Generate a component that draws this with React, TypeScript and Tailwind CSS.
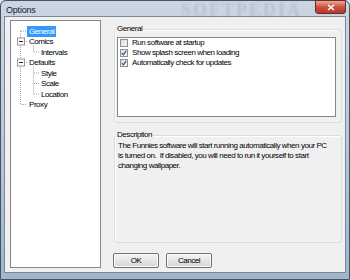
import React from 'react';

// Options dialog, Windows 7 Aero look, scaled down
const TREE = [
  { label: 'General', level: 0, selected: true },
  { label: 'Comics', level: 0 },
  { label: 'Intervals', level: 1 },
  { label: 'Defaults', level: 0 },
  { label: 'Style', level: 1 },
  { label: 'Scale', level: 1 },
  { label: 'Location', level: 1 },
  { label: 'Proxy', level: 0 },
];

const OPTIONS = [
  { label: 'Run software at startup', checked: false },
  { label: 'Show splash screen when loading', checked: true },
  { label: 'Automatically check for updates', checked: true },
];

function TreeLines() {
  const c = (i: number) => 10 + i * 10.5;
  const line = { stroke: '#a3a3a3', strokeWidth: 1, strokeDasharray: '1 1' };
  const box = (i: number) => (
    <g key={`b${i}`}>
      <rect x={6.5} y={c(i) - 3.5} width={7} height={7} fill="#fff" stroke="#979797" />
      <line x1={8} x2={12} y1={c(i)} y2={c(i)} stroke="#222" />
    </g>
  );
  return (
    <svg className="absolute inset-0 pointer-events-none" width="89" height="246">
      <line x1={9.5} x2={9.5} y1={c(0)} y2={c(7)} {...line} />
      <line x1={10} x2={16} y1={c(0)} y2={c(0)} {...line} />
      <line x1={10} x2={16} y1={c(7)} y2={c(7)} {...line} />
      <line x1={13} x2={16} y1={c(1)} y2={c(1)} {...line} />
      <line x1={13} x2={16} y1={c(3)} y2={c(3)} {...line} />
      <line x1={22.5} x2={22.5} y1={c(1) + 4} y2={c(2)} {...line} />
      <line x1={23} x2={28} y1={c(2)} y2={c(2)} {...line} />
      <line x1={22.5} x2={22.5} y1={c(3) + 4} y2={c(6)} {...line} />
      <line x1={23} x2={28} y1={c(4)} y2={c(4)} {...line} />
      <line x1={23} x2={28} y1={c(5)} y2={c(5)} {...line} />
      <line x1={23} x2={28} y1={c(6)} y2={c(6)} {...line} />
      {box(1)}
      {box(3)}
    </svg>
  );
}

function CheckBox({ checked }: { checked: boolean }) {
  return (
    <div className="w-[8px] h-[8px] border border-[#8e8f8f] bg-gradient-to-br from-[#dcdcdc] to-[#f6f6f6] flex items-center justify-center shrink-0">
      {checked && (
        <svg width="6" height="6" viewBox="0 0 6 6">
          <path d="M0.8 3.2 L2.4 4.8 L5.2 0.9" fill="none" stroke="#3a4f86" strokeWidth="1.2" />
        </svg>
      )}
    </div>
  );
}

function Button({ children }: { children: React.ReactNode }) {
  return (
    <button className="w-[46px] h-[15px] rounded-[2px] border border-[#707070] bg-gradient-to-b from-[#f3f3f3] via-[#e6e6e6] to-[#d3d3d3] text-[8px] leading-none text-black flex items-center justify-center shadow-[inset_0_0_0_1px_#fbfbfb]">
      {children}
    </button>
  );
}

export default function App() {
  return (
    <div className="w-[350px] h-[280px] overflow-hidden bg-[#d9dfe6] font-['Liberation_Sans',Arial,sans-serif] tracking-[-0.45px] text-black">
      <div className="relative w-[350px] h-[280px] flex flex-col rounded-t-[6px] border border-[#46525e] bg-gradient-to-b from-[#cad6e3] via-[#b9c8d8] to-[#9fb6cc] px-[3px] pb-[6px]">
        {/* title bar */}
        <div className="h-[16px] flex items-start justify-between">
          <span className="pl-[2px] pt-[4px] text-[9px] leading-[10px] text-[#1a1a1a] tracking-[-0.2px]">Options</span>
          <div className="w-[31px] h-[14px] -mt-px rounded-b-[3px] border border-[#6b2a24] bg-gradient-to-b from-[#e9a99a] via-[#c9503f] to-[#b8392c] flex items-center justify-center">
            <svg width="8" height="7" viewBox="0 0 8 7">
              <path d="M1 1 L7 6 M7 1 L1 6" stroke="#fff" strokeWidth="1.6" />
            </svg>
          </div>
        </div>
        <span className="absolute left-[180px] top-[-4px] text-[18px] font-bold tracking-[2px] text-[#4d5966] opacity-15 blur-[1px] font-['Liberation_Serif',serif] pointer-events-none">SOFTPEDIA</span>

        {/* client area */}
        <div className="flex-1 flex border border-[#7a8898] bg-[#f0f0f0] pt-[3px] pb-[4px] pl-[5px] pr-[3px]">
          {/* tree */}
          <div className="relative w-[91px] border border-[#828790] bg-white pt-[5px]">
            <TreeLines />
            {TREE.map((t) => (
              <div key={t.label} className={`relative h-[10.5px] flex items-center ${t.level === 0 ? 'pl-[16px]' : 'pl-[28px]'}`}>
                <span
                  className={`text-[8px] leading-[9px] px-[1px] border border-transparent ${t.selected ? 'bg-[#3399ff] text-white border-dotted border-[#6d5338]' : ''}`}
                >
                  {t.label}
                </span>
              </div>
            ))}
          </div>

          {/* right side */}
          <div className="flex-1 flex flex-col ml-[13px] pt-[4px]">
            <fieldset className="h-[99px] border border-[#d5dfe5] rounded-[3px] pl-[1px] pr-[5px] pb-[5px] shadow-[inset_1px_1px_0_#fff]">
              <legend className="px-[1px] text-[8px] leading-[10px]">General</legend>
              <div className="mt-[3px] ml-[1px] h-[80px] border border-[#828790] bg-white pl-[2px]">
                {OPTIONS.map((o) => (
                  <div key={o.label} className="h-[10px] flex items-center gap-[4px]">
                    <CheckBox checked={o.checked} />
                    <span className="text-[8px] leading-[10px]">{o.label}</span>
                  </div>
                ))}
              </div>
            </fieldset>

            <fieldset className="mt-[7px] h-[113px] border border-[#d5dfe5] rounded-[3px] pl-[1px] pr-[5px] shadow-[inset_1px_1px_0_#fff]">
              <legend className="px-[1px] text-[8px] leading-[10px]">Description</legend>
              <p className="pl-[2px] pt-[1px] text-[8px] leading-[10px] whitespace-pre">
                {'The Funnies software will start running automatically when your PC\nis turned on.  If disabled, you will need to run it yourself to start\nchanging wallpaper.'}
              </p>
            </fieldset>

            <div className="mt-[10px] -ml-[1px] flex gap-[7px]">
              <Button>OK</Button>
              <Button>Cancel</Button>
            </div>
          </div>
        </div>
      </div>
    </div>
  );
}
